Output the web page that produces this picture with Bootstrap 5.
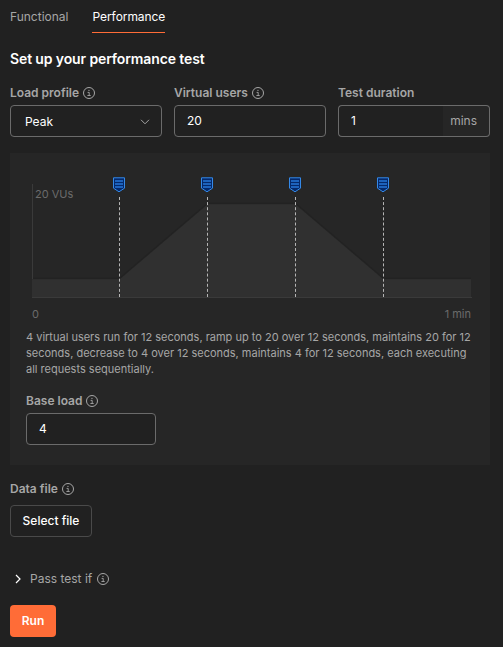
<!DOCTYPE html>
<html lang="en" data-bs-theme="dark">
<head>
<meta charset="utf-8">
<meta name="viewport" content="width=device-width, initial-scale=1">
<title>Performance test</title>
<link href="https://cdn.jsdelivr.net/npm/bootstrap@5.3.0/dist/css/bootstrap.min.css" rel="stylesheet">
<style>
body{background:#212121;color:#fff;font-family:Inter,"Liberation Sans",sans-serif;font-size:12px;line-height:16px;width:503px;height:647px;overflow:hidden}
.runner{padding:0 13px 0 10px}
.run-tabs{height:33px;gap:24px}
.run-tabs .nav-link{padding:9px 0 0;height:33px;color:#a6a6a6;line-height:16px}
.run-tabs .nav-link.active{color:#fff;box-shadow:inset 0 -1px #ff6c37;letter-spacing:-.06px}
.title{font-size:14px;line-height:20px;font-weight:600;margin:16px 0 0;letter-spacing:-.12px}
.fields{gap:12px;margin-top:16px}
.lbl{font-weight:600;color:#a6a6a6;height:16px;margin-bottom:4px;gap:4px}
.info{width:12px;height:12px;display:block;flex:none}
.form-control,.input-group-text{font-size:12px;line-height:16px;height:32px;padding:0 12px 1px;color:#fff;background:#212121;border-color:#6b6b6b;border-radius:4px}
.form-control{padding-bottom:2px}
.pick{padding:1px 11px 0 14px;border:1px solid #6b6b6b;border-radius:4px;height:32px}
.input-group-text{color:#a6a6a6;background:#262626;padding:0 12px 0 8px}
.span-input .form-control{border-right:0}
.span-input .input-group-text{border-left:0}
.panel{background:#262626;margin-top:16px;height:312px}
.plot{display:block}
.plot text{font-family:Inter,"Liberation Sans",sans-serif;font-size:11px;fill:#6b6b6b;font-weight:400}
.desc{font-size:11px;line-height:16px;color:#a6a6a6;margin:0 0 16px;white-space:nowrap}
.base-load{width:130px}
.btn{font-size:12px;line-height:16px;height:32px;padding:0;border-radius:4px;color:#fff;white-space:nowrap}
.btn-file{border-color:#4a4a4a;font-weight:500;width:82px}
.btn-run{background:#ff6c37;border:0;font-weight:600;width:46px}
.pass{height:16px;margin:34px 0 18px;padding-left:5px;color:#a6a6a6}
.pass span{margin:0 5px 0 9px}
</style>
</head>
<body>
<svg class="d-none">
  <symbol id="info" viewBox="0 0 12 12"><circle cx="6" cy="6" r="5.5" fill="none" stroke="#a6a6a6"/><path d="M5.3 3.4h1.3M4.6 5.4h1.6v3M4.4 8.5h3.3" fill="none" stroke="#a6a6a6" stroke-width=".9"/></symbol>
  <symbol id="flag" viewBox="0 0 12 16"><path d="M.5.8h11v10.4L6 14.8.5 11.2z" fill="#05296b" stroke="#3489e8"/><path d="M2 4h8M2 7h8M2 10h8" stroke="#1d63bd" stroke-width="1.8"/></symbol>
</svg>
<main class="runner">
  <nav class="nav run-tabs">
    <a class="nav-link" href="#">Functional</a>
    <a class="nav-link active" href="#">Performance</a>
  </nav>
  <h1 class="title">Set up your performance test</h1>
  <form>
    <div class="d-flex fields">
      <div class="flex-fill w-100">
        <div class="lbl d-flex align-items-center">Load profile <svg class="info"><use href="#info"/></svg></div>
        <div class="pick d-flex align-items-center justify-content-between">Peak
          <svg width="10" height="6" viewBox="0 0 10 6"><path d="M1 .8 5 4.8 9 .8" fill="none" stroke="#a6a6a6"/></svg>
        </div>
      </div>
      <div class="flex-fill w-100">
        <div class="lbl d-flex align-items-center">Virtual users <svg class="info"><use href="#info"/></svg></div>
        <input class="form-control" value="20" aria-label="Virtual users">
      </div>
      <div class="flex-fill w-100">
        <div class="lbl d-flex align-items-center">Test duration</div>
        <div class="input-group flex-nowrap span-input">
          <input class="form-control" value="1" aria-label="Test duration">
          <span class="input-group-text">mins</span>
        </div>
      </div>
    </div>
    <section class="panel">
      <svg class="plot" width="480" height="176" viewBox="0 0 480 176">
        <path d="M22 126H109.500L197.500 51H285.500L373.500 126H461V144H22z" fill="#303030"/>
        <path d="M22 125.500H109.500L197.500 50.500H285.500L373.500 125.500H461" fill="none" stroke="#222" stroke-width="1.500" opacity=".75"/>
        <path d="M22.500 31v95" stroke="#3a3a3a"/>
        <path d="M22 144.500h440" stroke="#3a3a3a"/>
        <path d="M109.500 44v100M197.500 44v100M285.500 44v100M373.500 44v100" stroke="#b5b5b5" stroke-dasharray="3 2.105"/>
        <use href="#flag" x="103" y="24" width="12" height="16"/>
        <use href="#flag" x="191" y="24" width="12" height="16"/>
        <use href="#flag" x="279" y="24" width="12" height="16"/>
        <use href="#flag" x="367" y="24" width="12" height="16"/>
        <text x="25" y="45">20 VUs</text>
        <text x="22" y="165">0</text>
        <text x="461" y="165" text-anchor="end">1 min</text>
      </svg>
      <div class="px-3">
        <p class="desc">4 virtual users run for 12 seconds, ramp up to 20 over 12 seconds, maintains 20 for 12<br>seconds, decrease to 4 over 12 seconds, maintains 4 for 12 seconds, each executing<br>all requests sequentially.</p>
        <div class="base-load">
          <div class="lbl d-flex align-items-center">Base load <svg class="info"><use href="#info"/></svg></div>
          <input class="form-control" value="4" aria-label="Base load">
        </div>
      </div>
    </section>
    <div class="lbl d-flex align-items-center mt-3 mb-2">Data file <svg class="info"><use href="#info"/></svg></div>
    <button type="button" class="btn btn-file d-block">Select file</button>
    <div class="pass d-flex align-items-center">
      <svg width="6" height="10" viewBox="0 0 6 10"><path d="M1 1 5 5 1 9" fill="none" stroke="#fff" stroke-width="1.2"/></svg>
      <span>Pass test if</span><svg class="info"><use href="#info"/></svg>
    </div>
    <button type="button" class="btn btn-run d-block">Run</button>
  </form>
</main>
<script src="https://cdn.jsdelivr.net/npm/bootstrap@5.3.0/dist/js/bootstrap.bundle.min.js"></script>
</body>
</html>
